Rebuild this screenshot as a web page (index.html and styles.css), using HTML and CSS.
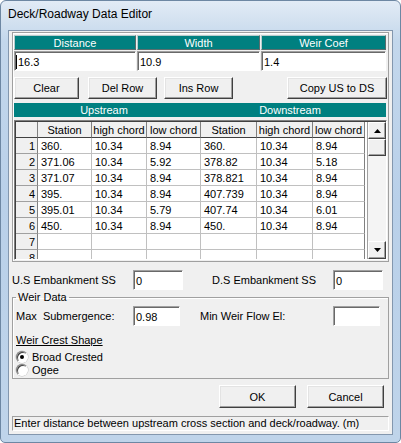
FILE: index.html
```html
<!DOCTYPE html>
<html>
<head>
<meta charset="utf-8">
<title>Deck/Roadway Data Editor</title>
<link rel="stylesheet" href="styles.css">
</head>
<body>
<div class="window">
  <div class="titlebar">Deck/Roadway Data Editor</div>
  <div class="client">
    <div class="panel">
      <div class="topgrid">
        <div class="hdr">Distance</div>
        <div class="hdr">Width</div>
        <div class="hdr">Weir Coef</div>
        <div class="field"><span class="caret"></span>16.3</div>
        <div class="field">10.9</div>
        <div class="field">1.4</div>
      </div>
      <div class="btnrow">
        <div class="btn b-clear">Clear</div>
        <div class="btn b-del">Del Row</div>
        <div class="btn b-ins">Ins Row</div>
        <div class="btn b-copy">Copy US to DS</div>
      </div>
      <div class="band"><div>Upstream</div><div>Downstream</div></div>
      <div class="gridwrap">
        <div class="tbl">
          <div class="gh corner"></div><div class="gh">Station</div><div class="gh">high chord</div><div class="gh">low chord</div><div class="gh">Station</div><div class="gh">high chord</div><div class="gh">low chord</div>
          <div class="rh">1</div><div class="c">360.</div><div class="c">10.34</div><div class="c">8.94</div><div class="c">360.</div><div class="c">10.34</div><div class="c">8.94</div>
          <div class="rh">2</div><div class="c">371.06</div><div class="c">10.34</div><div class="c">5.92</div><div class="c">378.82</div><div class="c">10.34</div><div class="c">5.18</div>
          <div class="rh">3</div><div class="c">371.07</div><div class="c">10.34</div><div class="c">8.94</div><div class="c">378.821</div><div class="c">10.34</div><div class="c">8.94</div>
          <div class="rh">4</div><div class="c">395.</div><div class="c">10.34</div><div class="c">8.94</div><div class="c">407.739</div><div class="c">10.34</div><div class="c">8.94</div>
          <div class="rh">5</div><div class="c">395.01</div><div class="c">10.34</div><div class="c">5.79</div><div class="c">407.74</div><div class="c">10.34</div><div class="c">6.01</div>
          <div class="rh">6</div><div class="c">450.</div><div class="c">10.34</div><div class="c">8.94</div><div class="c">450.</div><div class="c">10.34</div><div class="c">8.94</div>
          <div class="rh">7</div><div class="c"></div><div class="c"></div><div class="c"></div><div class="c"></div><div class="c"></div><div class="c"></div>
          <div class="rh">8</div><div class="c"></div><div class="c"></div><div class="c"></div><div class="c"></div><div class="c"></div><div class="c"></div>
        </div>
        <div class="vscroll">
          <div class="sbtn"><svg width="7" height="4" viewBox="0 0 7 4"><polygon points="0,4 7,4 3.5,0" fill="#000"/></svg></div>
          <div class="thumb"></div>
          <div class="sbtn down"><svg width="7" height="4" viewBox="0 0 7 4"><polygon points="0,0 7,0 3.5,4" fill="#000"/></svg></div>
        </div>
      </div>
    </div>
    <div class="emb">
      <div class="lbl1">U.S Embankment SS</div>
      <div class="field ef">0</div>
      <div class="lbl2">D.S Embankment SS</div>
      <div class="field ef">0</div>
    </div>
    <fieldset class="weir">
      <legend>Weir Data</legend>
      <div class="weirrow">
        <div class="wl">Max&nbsp; Submergence:</div>
        <div class="field wf">0.98</div>
        <div></div>
        <div class="wl">Min Weir Flow El:</div>
        <div class="field wf"></div>
      </div>
      <div class="crest">Weir Crest Shape</div>
      <div class="radio"><span class="dot on"></span>Broad Crested</div>
      <div class="radio"><span class="dot"></span>Ogee</div>
    </fieldset>
    <div class="actions">
      <div class="btn b-ok">OK</div>
      <div class="btn b-cancel">Cancel</div>
    </div>
    <div class="status">Enter distance between upstream cross section and deck/roadway. (m)</div>
  </div>
</div>
</body>
</html>
```
FILE: styles.css
```css
* { box-sizing: border-box; }
html, body { margin: 0; padding: 0; background: #fff; }
body { font-family: "Liberation Sans", Arial, sans-serif; font-size: 11px; color: #000; }

.window {
  width: 401px; height: 443px;
  border: 1px solid #6d87a3;
  border-radius: 6px 6px 5px 5px;
  background: linear-gradient(to bottom, #e2ebf6 0, #d3e1f0 20px, #c3d7ec 40px, #b9d0e9 200px, #bfd4ea 100%);
  padding: 0 7px 7px 7px;
  display: flex; flex-direction: column;
  overflow: hidden;
}
.titlebar {
  height: 29px; display: flex; align-items: center;
  padding-bottom: 3px;
  font-size: 12px; color: #000;
}
.client {
  flex: 1;
  background: #f0f0f0;
  border: 1px solid #8397ae;
  display: flex; flex-direction: column;
  padding: 0 0 0 3px;
}
.panel {
  margin-top: 1px;
  width: 377px; height: 230px;
  border: 1px solid #a0a0a0;
  box-shadow: inset 1px 1px 0 #fff;
  padding: 2px 1px 0 1px;
}
.topgrid {
  display: grid;
  grid-template-columns: 122px 123px 125px;
  grid-template-rows: 15px 20px;
  gap: 1px;
}
.hdr {
  background: #008080; color: #fff;
  display: flex; align-items: center; justify-content: center;
  border: 1px solid;
  border-color: #b8cccc #5a6e6e #5a6e6e #b8cccc;
}
.field {
  background: #fff;
  border: 1px solid;
  border-color: #a0a0a0 #fff #fff #a0a0a0;
  box-shadow: inset 1px 1px 0 #696969;
  display: flex; align-items: center;
  padding-left: 2px; padding-top: 1px;
}
.caret { display: inline-block; width: 1px; height: 14px; background: #000; margin-right: 1px; margin-left: -1px; }
.btnrow { display: flex; margin-top: 6px; height: 22px; }
.btn {
  background: #f0f0f0;
  border: 1px solid;
  border-color: #fff #404040 #404040 #fff;
  box-shadow: inset -1px -1px 0 #a0a0a0, inset 1px 1px 0 #e3e3e3;
  display: flex; align-items: center; justify-content: center;
}
.b-clear { width: 65px; }
.b-del { width: 69px; margin-left: 9px; }
.b-ins { width: 69px; margin-left: 7px; }
.b-copy { width: 100px; margin-left: auto; }

.band {
  margin-top: 4px; height: 14px; width: 372px;
  background: #008080; color: #fff;
  display: grid; grid-template-columns: 180px 1fr;
}
.band div { display: flex; align-items: center; justify-content: center; }

.gridwrap {
  margin-top: 3px;
  width: 373px; height: 140px;
  border: 1px solid;
  border-color: #808080 #fff #fff #808080;
  box-shadow: inset 1px 1px 0 #404040;
  padding: 1px 0 0 1px;
  display: flex;
  background: #fff;
  overflow: hidden;
}
.tbl {
  width: 349px; height: 137px;
  display: grid;
  grid-template-columns: 22px 54px 55px 54px 56px 56px 52px;
  grid-auto-rows: 16px;
  align-content: start;
  overflow: hidden;
}
.gh {
  background: #f0f0f0;
  border-right: 1px solid #808080;
  border-bottom: 1px solid #404040;
  display: flex; align-items: center; justify-content: center;
  white-space: nowrap;
}
.rh {
  background: #f0f0f0;
  border-right: 1px solid #808080;
  border-bottom: 1px solid #a0a0a0;
  display: flex; align-items: center; justify-content: flex-end;
  padding-right: 2px;
}
.c {
  background: #fff;
  border-right: 1px solid #c0c0c0;
  border-bottom: 1px solid #c0c0c0;
  display: flex; align-items: center;
  padding-left: 3px;
  white-space: nowrap;
}
.c:nth-child(7n) { border-right-color: #808080; }
.vscroll {
  margin-left: 2px; width: 19px; height: 137px;
  background: #f4f4f4;
  border-left: 1px solid #a0a0a0;
  display: flex; flex-direction: column;
}
.sbtn, .thumb {
  height: 17px;
  background: #f0f0f0;
  border: 1px solid;
  border-color: #fff #404040 #404040 #fff;
  box-shadow: inset -1px -1px 0 #a0a0a0;
  display: flex; align-items: center; justify-content: center;
}
.sbtn.down { margin-top: auto; height: 18px; }

.emb {
  margin-top: 8px; height: 20px; width: 371px;
  display: flex; align-items: center;
}
.lbl1 { width: 121px; }
.ef { width: 50px; height: 20px; }
.lbl2 { flex: 1; text-align: right; padding-right: 17px; }

.weir {
  margin: 1px 0 0 0;
  width: 377px;
  min-width: 0;
  border: 1px solid #a0a0a0;
  box-shadow: inset 1px 1px 0 #fff;
  padding: 0 3px 2px 3px;
}
.weir legend { padding: 0 2px; margin-left: 0; line-height: 13px; height: 13px; }
.weirrow {
  margin-top: 2px;
  display: grid;
  grid-template-columns: 117px 47px 20px 133px 47px;
  grid-template-rows: 20px;
  align-items: center;
}
.wf { height: 20px; }
.crest { margin-top: 8px; line-height: 13px; height: 13px; text-decoration: underline; }
.radio { display: flex; align-items: center; height: 13px; }
.crest + .radio { margin-top: 3px; }
.dot {
  width: 12px; height: 12px; border-radius: 50%;
  border: 1px solid; border-color: #808080 #fff #fff #808080;
  box-shadow: inset 1px 1px 0 #404040, 0 0 0 0.5px #c0c0c0;
  background: #fff;
  margin-right: 4px;
  display: flex; align-items: center; justify-content: center;
}
.dot.on::after { content: ""; width: 4px; height: 4px; border-radius: 50%; background: #000; }

.actions {
  margin-top: 6px; height: 23px;
  display: flex; justify-content: flex-end; gap: 11px;
  padding-right: 8px;
}
.b-ok, .b-cancel { width: 77px; }
.status {
  margin-top: 8px; width: 377px; height: 15px;
  border: 1px solid; border-color: #a0a0a0 #fff #fff #a0a0a0;
  padding-left: 1px; line-height: 13px;
  white-space: nowrap; overflow: hidden;
}
```
